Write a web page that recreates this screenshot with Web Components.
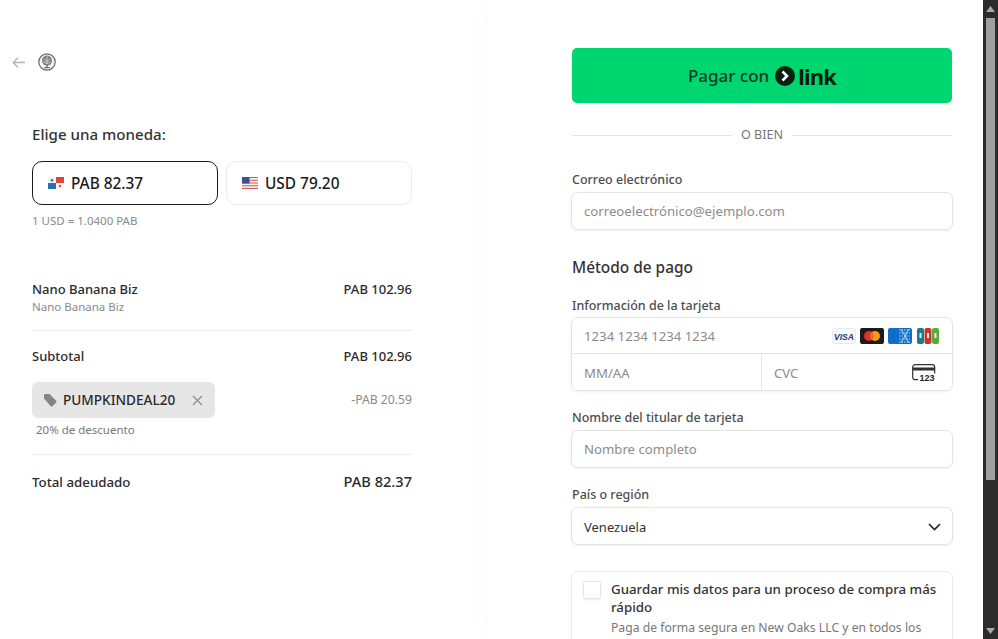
<!DOCTYPE html>
<html lang="es">
<head>
<meta charset="utf-8">
<title>Pago</title>
<style>
  html, body { margin: 0; height: 100%; overflow: hidden; background: #fff; }
  body { font-family: "Noto Sans", "Open Sans", sans-serif; color: #1a1a1a; }
</style>
</head>
<body>
<checkout-page>
  <order-summary slot="left"></order-summary>
  <payment-form slot="right"></payment-form>
</checkout-page>

<script>
class CheckoutPage extends HTMLElement {
  constructor() {
    super();
    this.attachShadow({ mode: "open" });
    this.shadowRoot.innerHTML = `
      <style>
        :host { display: flex; height: 639px; overflow: hidden; }
        .left { width: 490px; flex: none; }
        .right {
          flex: 1;
          padding-left: 82px;
          box-shadow: -12px 0 24px rgba(0, 0, 0, 0.01);
          overflow: hidden;
        }
        .bar { width: 15px; flex: none; background: #2b2b2b; display: flex; flex-direction: column; align-items: center; }
        .arrow { height: 17px; flex: none; display: flex; align-items: center; justify-content: center; }
        .thumb { width: 9px; height: 462px; margin-top: 1px; background: #9f9f9f; }
        .space { flex: 1; }
      </style>
      <div class="left"><slot name="left"></slot></div>
      <div class="right"><slot name="right"></slot></div>
      <div class="bar">
        <div class="arrow"><svg width="9" height="6" viewBox="0 0 9 6"><path d="M4.5 0 9 6H0z" fill="#a8a8a8"/></svg></div>
        <div class="thumb"></div>
        <div class="space"></div>
        <div class="arrow"><svg width="9" height="6" viewBox="0 0 9 6"><path d="M0 0h9L4.5 6z" fill="#a8a8a8"/></svg></div>
      </div>
    `;
  }
}

class CurrencyOption extends HTMLElement {
  constructor() {
    super();
    this.attachShadow({ mode: "open" });
    this.shadowRoot.innerHTML = `
      <style>
        :host {
          display: flex; align-items: center; gap: 7px;
          box-sizing: border-box; width: 186px; height: 44px;
          padding-left: 15px;
          border: 1px solid #ececec; border-radius: 10px;
          font-size: 15.4px; font-weight: 500; color: #1a1a1a;
          box-shadow: 0 1px 2px rgba(0, 0, 0, 0.02);
        }
        :host([selected]) { border-color: #1a1a1a; }
        ::slotted(svg) { flex: none; }
      </style>
      <slot name="flag"></slot><slot></slot>
    `;
  }
}

class SummaryRow extends HTMLElement {
  constructor() {
    super();
    this.attachShadow({ mode: "open" });
    this.shadowRoot.innerHTML = `
      <style>
        :host { display: flex; justify-content: space-between; font-size: 13px; font-weight: 500; color: #2b2b2b; line-height: 18px; }
      </style>
      <span><slot name="label"></slot></span>
      <span><slot name="value"></slot></span>
    `;
  }
}

class OrderSummary extends HTMLElement {
  constructor() {
    super();
    this.attachShadow({ mode: "open" });
    this.shadowRoot.innerHTML = `
      <style>
        :host { display: block; padding: 52px 0 0 12px; }
        .nav { display: flex; align-items: center; gap: 13px; height: 20px; }
        .body { width: 380px; padding-left: 20px; }
        h2 { margin: 52px 0 0; font-size: 15.1px; line-height: 20px; font-weight: 500; color: #333; }
        .options { display: flex; gap: 8px; margin-top: 17px; }
        .rate { margin-top: 8px; font-size: 11.5px; line-height: 16px; color: #8a8a8a; }
        .items { margin-top: 51px; }
        .sub { font-size: 11.5px; line-height: 16px; color: #8a8a8a; margin-top: 1px; }
        hr { border: 0; border-top: 1px solid #ececec; margin: 0; }
        .coupon-row { display: flex; justify-content: space-between; margin-top: 17px; }
        .chip {
          display: flex; align-items: center; box-sizing: border-box;
          width: 183px; height: 36px; padding: 0 0 0 11px;
          background: #e6e6e6; border-radius: 6px;
          font-size: 13.6px; font-weight: 500; color: #2b2b2b;
        }
        .chip span { margin: 0 0 2px 6px; flex: 1; }
        .chip svg:last-child { margin-right: 12px; }
        .discount { font-size: 12.2px; line-height: 36px; color: #8a8a8a; }
        .note { margin: 4px 0 0 4px; font-size: 11.5px; line-height: 16px; color: #777; }
        .total-label { font-size: 13.3px; }
        .total-value { display: block; margin-top: -1px; font-size: 14.6px; }
      </style>
      <div class="nav">
        <svg width="13" height="11" viewBox="0 0 13 11" fill="none" stroke="#b5b5b5" stroke-width="1.4"><path d="M6 .8 1.2 5.5 6 10.2M1.2 5.5H13"/></svg>
        <svg width="18" height="18" viewBox="0 0 18 18" fill="none">
          <circle cx="9" cy="9" r="8.2" stroke="#6a6a6a" stroke-width="1.2" fill="#f4f4f4"/>
          <circle cx="9" cy="7.6" r="5" fill="#808080"/>
          <path d="M9 3.5v8M6.4 6 9 8.8 11.6 6M5.5 8.5 9 11l3.500-2.500" stroke="#e8e8e8" stroke-width=".7"/>
          <path d="M9 11v3.500M6 14.700h6" stroke="#555" stroke-width="1.1"/>
        </svg>
      </div>
      <div class="body">
        <h2>Elige una moneda:</h2>
        <div class="options">
          <currency-option selected>
            <svg slot="flag" width="16" height="12" viewBox="0 0 16 12"><path d="M8 0h8v6H8z" fill="#d8483c"/><path d="M0 6h8v6H0z" fill="#2a6fb0"/><path d="M0 0h8v6H0zM8 6h8v6H8z" fill="#f4f4f4"/><circle cx="4" cy="3.2" r="1.3" fill="#2a6fb0"/><circle cx="12" cy="9" r="1.2" fill="#d8483c"/></svg>
            PAB 82.37
          </currency-option>
          <currency-option>
            <svg slot="flag" width="16" height="12" viewBox="0 0 16 12"><path d="M0 0h16v12H0z" fill="#f6f0f0"/><path d="M0 0h16v1H0zM0 2.800h16v1H0zM0 5.500h16v1H0zM0 8.200h16v1H0zM0 11h16v1H0z" fill="#cf5a56"/><path d="M0 0h7.500v6.500H0z" fill="#3d4f8f"/></svg>
            USD 79.20
          </currency-option>
        </div>
        <div class="rate">1 USD = 1.0400 PAB</div>
        <div class="items">
          <summary-row><span slot="label">Nano Banana Biz</span><span slot="value">PAB 102.96</span></summary-row>
          <div class="sub">Nano Banana Biz</div>
        </div>
        <hr style="margin-top:15px">
        <summary-row style="margin-top:16px"><span slot="label">Subtotal</span><span slot="value">PAB 102.96</span></summary-row>
        <div class="coupon-row">
          <div class="chip">
            <svg width="14" height="14" viewBox="0 0 14 14"><path d="M1 2.200C1 1.500 1.500 1 2.200 1h4.300l6.700 6.700c.5.500.5 1.200 0 1.700l-3.800 3.800c-.5.500-1.200.5-1.700 0L1 5.500z" fill="#858585"/></svg>
            <span>PUMPKINDEAL20</span>
            <svg width="11" height="11" viewBox="0 0 11 11" stroke="#8f8f8f" stroke-width="1.3"><path d="M1 1l9 9M10 1l-9 9"/></svg>
          </div>
          <div class="discount">-PAB 20.59</div>
        </div>
        <div class="note">20% de descuento</div>
        <hr style="margin-top:16px">
        <summary-row style="margin-top:18px"><span slot="label" class="total-label">Total adeudado</span><span slot="value" class="total-value">PAB 82.37</span></summary-row>
      </div>
    `;
  }
}

class FormField extends HTMLElement {
  constructor() {
    super();
    this.attachShadow({ mode: "open" });
    this.shadowRoot.innerHTML = `
      <style>
        :host { display: block; }
        label { display: block; font-size: 12.5px; font-weight: 500; line-height: 16px; color: #4d4d4d; margin-bottom: var(--label-gap, 4px); }
        .box {
          margin-left: -1px;
          border: 1px solid #e4e4e4; border-radius: 7px;
          box-shadow: 0 1px 3px rgba(0, 0, 0, 0.06);
          font-size: 13.2px; color: #8c8c8c;
        }
      </style>
      <label>${this.getAttribute("label")}</label>
      <div class="box"><slot></slot></div>
    `;
  }
}

class TextBox extends HTMLElement {
  constructor() {
    super();
    this.attachShadow({ mode: "open" });
    this.shadowRoot.innerHTML = `
      <style>
        :host { display: flex; align-items: center; justify-content: space-between; box-sizing: border-box; height: 36px; padding: 0 12px; }
        :host([value]) { color: #333; font-size: 13px; padding-right: 11px; }
        :host([short]) { height: 35px; }
        :host([low]) { padding-top: 2px; }
      </style>
      <slot></slot>
    `;
  }
}

class PaymentForm extends HTMLElement {
  constructor() {
    super();
    this.attachShadow({ mode: "open" });
    this.shadowRoot.innerHTML = `
      <style>
        :host { display: block; width: 381px; padding-top: 48px; }
        .pay {
          display: flex; align-items: center; justify-content: center;
          width: 380px; height: 55px; border-radius: 5px; background: #00d66f;
          color: #0b3b22; font-size: 17px; font-weight: 500;
        }
        .link { display: flex; align-items: center; margin-left: 6px; gap: 3px; font-size: 22px; font-weight: 700; color: #04200f; letter-spacing: -0.8px; line-height: 24px; }
        .or { display: flex; align-items: center; gap: 9px; width: 380px; margin-top: 23px; font-size: 12.6px; line-height: 18px; color: #777; }
        .or i { flex: 1; border-top: 1px solid #e3e3e3; }
        h3 { margin: 0; font-size: 15.4px; font-weight: 500; line-height: 20px; color: #333; }
        .cards { display: flex; gap: 4px; }
        .split { display: flex; border-top: 1px solid #e4e4e4; }
        .split text-box:first-child { flex: 0 0 190px; box-sizing: border-box; border-right: 1px solid #e4e4e4; }
        .split text-box:last-child { flex: 1; }
        .cvc { margin-right: 4px; }
        .save { display: flex; gap: 10px; margin: 26px 0 0 -1px; padding: 8px 11px 0; height: 80px; border: 1px solid #e9e9e9; border-radius: 7px; box-shadow: 0 1px 3px rgba(0, 0, 0, 0.04); }
        .check { flex: none; width: 16px; height: 16px; margin-top: 1px; border: 1px solid #e4e4e4; border-radius: 3px; box-shadow: 0 1px 2px rgba(0, 0, 0, 0.08); }
        .save b { display: block; font-size: 13.3px; font-weight: 500; line-height: 18px; color: #333; }
        .save p { margin: 3px 0 0; font-size: 12.2px; line-height: 18px; color: #777; }
      </style>
      <div class="pay">Pagar con
        <span class="link">
          <svg width="20" height="20" viewBox="0 0 20 20"><circle cx="10" cy="10" r="10" fill="#04200f"/><path d="M7.5 5.500 12 10l-4.500 4.500" fill="none" stroke="#fff" stroke-width="2.6"/></svg>
          link
        </span>
      </div>
      <div class="or"><i></i>O BIEN<i></i></div>
      <form-field label="Correo electrónico" style="margin-top:28px"><text-box>correoelectrónico@ejemplo.com</text-box></form-field>
      <h3 style="margin-top:28px">Método de pago</h3>
      <form-field label="Información de la tarjeta" style="margin-top:20px;--label-gap:3px">
        <text-box short>1234 1234 1234 1234
          <span class="cards">
            <svg width="24" height="16" viewBox="0 0 24 16"><rect x=".5" y=".5" width="23" height="15" rx="2" fill="#f7f8fc" stroke="#e6e8f0"/><text x="12" y="11.500" text-anchor="middle" font-family="Liberation Sans" font-size="8.5" font-weight="700" font-style="italic" fill="#25357f">VISA</text></svg>
            <svg width="24" height="16" viewBox="0 0 24 16"><rect width="24" height="16" rx="2" fill="#1d1a1a"/><circle cx="9" cy="8" r="5" fill="#e0302a"/><circle cx="15" cy="8" r="5" fill="#f59c1a"/><path d="M12 4a5 5 0 0 1 0 8 5 5 0 0 1 0-8z" fill="#f26522"/></svg>
            <svg width="24" height="16" viewBox="0 0 24 16"><rect width="24" height="16" rx="2" fill="#0f6fc6"/><path d="M11 2h11M11 5h11M11 8h11M11 11h11M11 14h11" stroke="#a9d4f2" stroke-width="1" stroke-dasharray="1.500 1"/><path d="M13 1l8 14M21 1l-8 14" stroke="#d7ecfa" stroke-width=".8"/></svg>
            <svg width="24" height="16" viewBox="0 0 24 16"><rect x="1" width="7" height="16" rx="2" fill="#1f7a8c"/><rect x="8.500" width="7" height="16" rx="2" fill="#c7352d"/><rect x="16" width="7" height="16" rx="2" fill="#5fa83f"/><path d="M4.500 5v5M12 5v5M19.500 5v5" stroke="#e6f0e6" stroke-width="2"/></svg>
          </span>
        </text-box>
        <div class="split">
          <text-box low>MM/AA</text-box>
          <text-box low>CVC
            <svg class="cvc" width="24" height="18" viewBox="0 0 24 18"><rect x=".7" y=".7" width="22" height="15" rx="2.500" fill="#fff" stroke="#333" stroke-width="1.200"/><rect x="1" y="3.500" width="22" height="3" fill="#333"/><rect x="6" y="9.500" width="18" height="8.500" fill="#fff"/><text x="15" y="17" text-anchor="middle" font-family="Liberation Sans" font-size="9" font-weight="700" fill="#222">123</text></svg>
          </text-box>
        </div>
      </form-field>
      <form-field label="Nombre del titular de tarjeta" style="margin-top:19px"><text-box>Nombre completo</text-box></form-field>
      <form-field label="País o región" style="margin-top:19px">
        <text-box value low>Venezuela
          <svg width="13" height="8" viewBox="0 0 13 8" fill="none" stroke="#222" stroke-width="1.6"><path d="M1 1l5.500 5.500L12 1"/></svg>
        </text-box>
      </form-field>
      <div class="save">
        <div class="check"></div>
        <div>
          <b>Guardar mis datos para un proceso de compra más rápido</b>
          <p>Paga de forma segura en New Oaks LLC y en todos los</p>
        </div>
      </div>
    `;
  }
}

customElements.define("checkout-page", CheckoutPage);
customElements.define("currency-option", CurrencyOption);
customElements.define("summary-row", SummaryRow);
customElements.define("order-summary", OrderSummary);
customElements.define("form-field", FormField);
customElements.define("text-box", TextBox);
customElements.define("payment-form", PaymentForm);
</script>
</body>
</html>
